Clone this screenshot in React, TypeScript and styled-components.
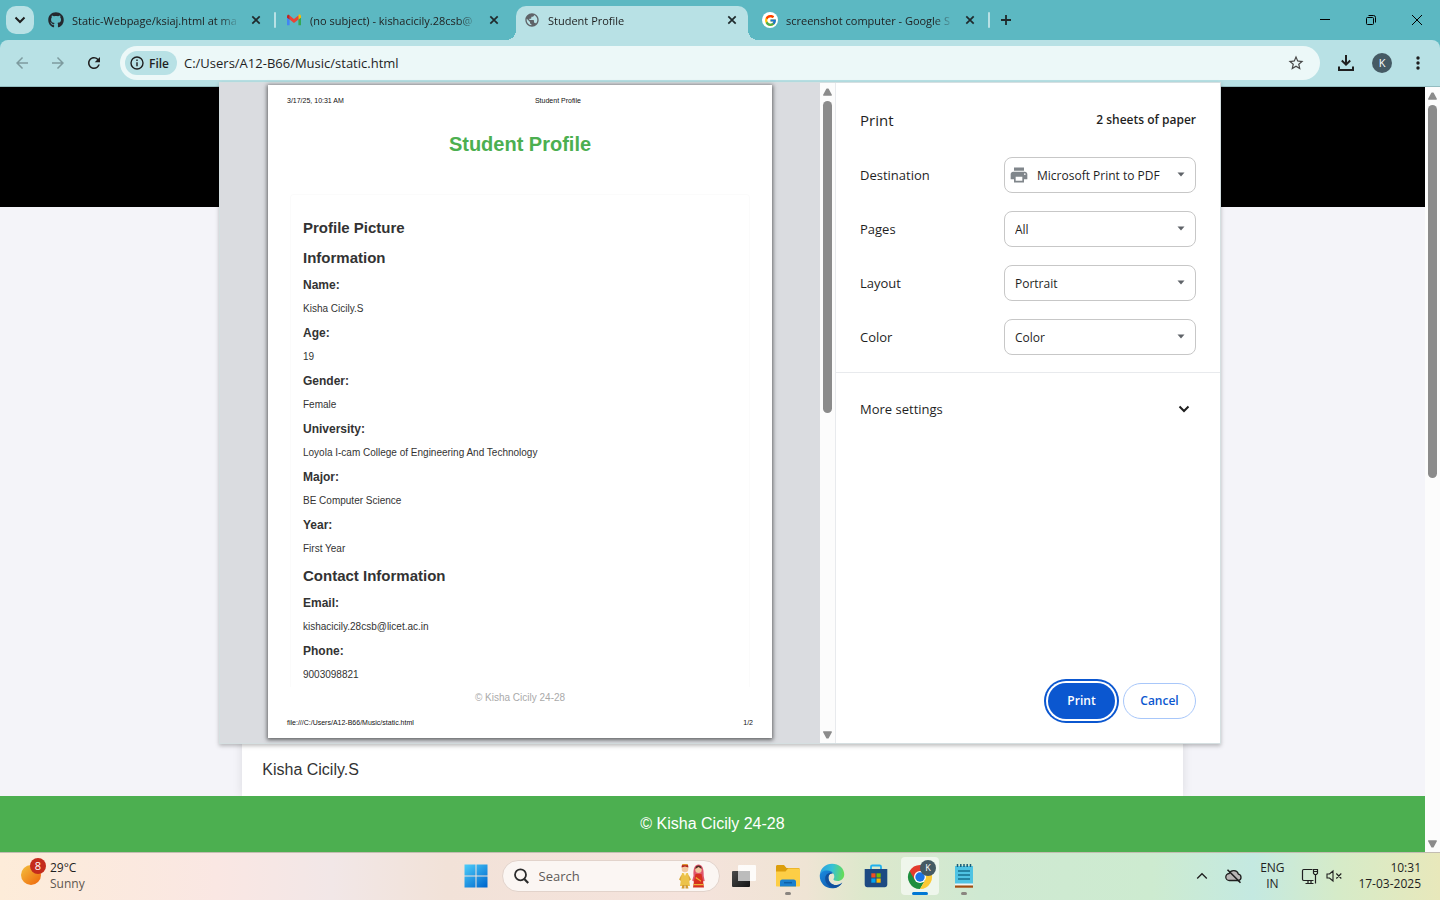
import React from "react";
import styled, { createGlobalStyle, css } from "styled-components";
import { FaGithub } from "react-icons/fa";
import { FcGoogle } from "react-icons/fc";
import { MdArrowBack, MdArrowForward, MdPrint, MdPublic, MdRefresh, MdStarBorder } from "react-icons/md";

const ui = `"Open Sans", "Noto Sans", sans-serif`;
const doc = `"Liberation Sans", Arial, sans-serif`;

const GlobalStyle = createGlobalStyle`
  *, *::before, *::after { box-sizing: border-box; }
  body { margin: 0; font-family: ${ui}; color: #1f1f1f; }
  button, input, select { font: inherit; color: inherit; }
  button { border: 0; padding: 0; background: none; cursor: pointer; }
  h1, h2, h3, p { margin: 0; }
  svg { display: block; flex: none; }
`;

const Screen = styled.div`
  position: relative;
  display: flex;
  flex-direction: column;
  height: 100vh;
  min-height: 800px;
  overflow: hidden;
  background: #5cb8c2;
`;

/* ---------- tab strip ---------- */

const TabStrip = styled.header`
  display: flex;
  align-items: center;
  height: 40px;
  padding-left: 6px;
`;

const TabSearch = styled.button`
  display: grid;
  place-items: center;
  width: 28px;
  height: 28px;
  margin-right: 6px;
  border-radius: 10px;
  background: #b8e1e5;
`;

const Tab = styled.div<{ $active?: boolean }>`
  position: relative;
  display: flex;
  align-items: center;
  gap: 8px;
  width: 232px;
  height: 34px;
  align-self: flex-end;
  padding: 0 8px 6px;
  border-radius: 10px 10px 0 0;
  font-size: 11px;
  line-height: 16px;
  ${(p) =>
    p.$active &&
    css`
      background: #b8e1e5;
      &::before,
      &::after {
        content: "";
        position: absolute;
        bottom: 0;
        width: 10px;
        height: 10px;
      }
      &::before {
        right: 100%;
        background: radial-gradient(circle at 0 0, transparent 10px, #b8e1e5 10px);
      }
      &::after {
        left: 100%;
        background: radial-gradient(circle at 100% 0, transparent 10px, #b8e1e5 10px);
      }
    `}
`;

const TabTitle = styled.span`
  flex: 1;
  padding-top: 2px;
  overflow: hidden;
  white-space: nowrap;
  mask-image: linear-gradient(to right, #000 88%, transparent);
`;

const TabGap = styled.span<{ $line?: boolean }>`
  width: 2px;
  height: 16px;
  margin: 0 2px;
  border-radius: 1px;
  background: ${(p) => (p.$line ? "#b8e1e5" : "transparent")};
`;

const IconButton = styled.button<{ $size?: number }>`
  display: grid;
  place-items: center;
  flex: none;
  width: ${(p) => p.$size ?? 16}px;
  height: ${(p) => p.$size ?? 16}px;
`;

const GoogleBadge = styled.span`
  display: grid;
  place-items: center;
  width: 16px;
  height: 16px;
  border-radius: 50%;
  background: #fff;
`;

const WindowControls = styled.div`
  display: flex;
  margin-left: auto;
`;

const WindowButton = styled.button`
  display: grid;
  place-items: center;
  width: 46px;
  height: 40px;
`;

/* ---------- toolbar ---------- */

const Toolbar = styled.div`
  display: flex;
  align-items: center;
  height: 47px;
  padding: 0 4px;
  border-bottom: 1px solid #93bcc0;
  border-radius: 8px 8px 0 0;
  background: #b8e1e5;
`;

const Omnibox = styled.div`
  display: flex;
  align-items: center;
  flex: 1;
  height: 34px;
  margin: 0 8px;
  padding: 0 6px 0 5px;
  border-radius: 17px;
  background: #ecf8f8;
`;

const FileChip = styled.button`
  display: flex;
  align-items: center;
  gap: 4px;
  height: 24px;
  padding: 0 8px 0 4px;
  border-radius: 12px;
  background: #b8e1e5;
  font-size: 12px;
  font-weight: 600;
`;

const Address = styled.input`
  flex: 1;
  min-width: 0;
  padding: 0 7px;
  border: 0;
  outline: 0;
  background: none;
  font-size: 13px;
  line-height: 20px;
`;

const Avatar = styled.button`
  width: 20px;
  height: 20px;
  margin: 0 8px;
  border-radius: 50%;
  background: #455a64;
  color: #fff;
  font-size: 11px;
  line-height: 20px;
`;

/* ---------- page behind the dialog ---------- */

const Viewport = styled.div`
  display: flex;
  flex: 1;
  min-height: 0;
`;

const WebPage = styled.main`
  display: flex;
  flex-direction: column;
  flex: 1;
  background: #f4f4f9;
  font-family: ${doc};
  font-size: 16px;
  line-height: 18px;
  color: #333;
`;

const Banner = styled.div`
  height: 120px;
  background: #000;
`;

const Card = styled.section`
  display: flex;
  flex: 1;
  align-items: flex-end;
  width: 66%;
  margin: 20px auto 0;
  padding: 17px 20px;
  background: #fff;
  box-shadow: 0 0 10px rgba(0, 0, 0, 0.1);
`;

const PageFooter = styled.footer`
  position: relative;
  padding: 19px;
  background: #4caf50;
  color: #fff;
  text-align: center;
`;

const ScrollTrack = styled.div`
  display: flex;
  flex-direction: column;
  align-items: center;
  flex: none;
  width: 15px;
  padding: 5px 0 4px;
  background: #fcfcfc;
`;

const ScrollThumb = styled.div<{ $grow: number }>`
  flex: ${(p) => p.$grow} 0 0;
  width: 9px;
  margin-top: 5px;
  border-radius: 5px;
  background: #8b8b8b;
`;

const ScrollRest = styled.div<{ $grow: number }>`
  flex: ${(p) => p.$grow} 0 0;
`;

/* ---------- print dialog ---------- */

const Dialog = styled.div`
  position: absolute;
  top: 82px;
  left: 0;
  right: 0;
  display: flex;
  width: 1002px;
  max-width: 100%;
  margin: 0 auto;
  border: 1px solid #d5dfe1;
  background: #fff;
  box-shadow: 0 2px 4px rgba(0, 0, 0, 0.25);
`;

const Preview = styled.div`
  flex: 1;
  padding: 2px 48px 5px;
  background: #dadce0;
`;

const Paper = styled.article`
  display: flex;
  flex-direction: column;
  height: 100%;
  padding-top: 11px;
  background: #fff;
  box-shadow: 0 1px 4px 1px rgba(0, 0, 0, 0.55);
  font-family: ${doc};
  color: #333;
`;

const PaperLine = styled.div`
  display: flex;
  justify-content: space-between;
  padding: 0 19px;
  font-size: 7px;
  line-height: 10px;
  color: #111;
`;

const PaperHeader = styled(PaperLine)`
  padding-right: 0;
`;

const PaperCaption = styled.span`
  flex: 1;
  text-align: center;
`;

const PaperTitle = styled.h1`
  margin-top: 26px;
  font-size: 20px;
  line-height: 24px;
  text-align: center;
  color: #4caf50;
`;

const PaperBox = styled.div`
  margin: 38px 22px 0;
  padding: 18px 12px 0;
  border: 1px solid #fbfbfb;
  border-bottom: 0;
  border-radius: 4px 4px 0 0;
`;

const SectionTitle = styled.h2`
  font-size: 15px;
  line-height: 30px;
`;

const FieldLabel = styled.h3`
  font-size: 12px;
  line-height: 24px;
`;

const FieldValue = styled.p`
  font-size: 10px;
  line-height: 24px;
`;

const PaperCopyright = styled.p`
  font-size: 10px;
  line-height: 22px;
  text-align: center;
  color: #aaa;
`;

const PaperFooter = styled(PaperLine)`
  padding-top: 9px;
  padding-bottom: 10px;
`;

const Settings = styled.form`
  display: flex;
  flex-direction: column;
  width: 385px;
  border-left: 1px solid #e8eaed;
  font-size: 13px;
  line-height: 20px;
`;

const SettingsHead = styled.div`
  display: flex;
  align-items: center;
  justify-content: space-between;
  height: 74px;
  padding: 0 24px;
`;

const SettingsTitle = styled.h1`
  font-size: 15px;
  font-weight: 400;
`;

const Sheets = styled.span`
  font-size: 12px;
  font-weight: 600;
`;

const SettingsList = styled.div`
  display: flex;
  flex-direction: column;
  gap: 18px;
  padding: 0 24px 17px;
  border-bottom: 1px solid #e8eaed;
`;

const SettingRow = styled.label`
  display: flex;
  align-items: center;
  justify-content: space-between;
`;

const SelectWrap = styled.span`
  position: relative;
  width: 192px;
`;

const Select = styled.select<{ $icon?: boolean }>`
  display: block;
  width: 100%;
  height: 36px;
  padding: 2px 24px 0 ${(p) => (p.$icon ? 32 : 10)}px;
  appearance: none;
  border: 1px solid #c7c7c7;
  border-radius: 8px;
  background: #fff;
  font-size: 12px;
`;

const SelectArrow = styled.svg`
  position: absolute;
  top: 15px;
  right: 11px;
  pointer-events: none;
`;

const SelectIcon = styled.span`
  position: absolute;
  top: 8px;
  left: 5px;
  color: #80868b;
  pointer-events: none;
`;

const MoreSettings = styled.button`
  display: flex;
  align-items: center;
  justify-content: space-between;
  height: 71px;
  padding: 0 30px 0 24px;
`;

const Actions = styled.div`
  display: flex;
  justify-content: flex-end;
  gap: 8px;
  margin-top: auto;
  padding: 24px;
`;

const ActionButton = styled.button<{ $primary?: boolean }>`
  height: 36px;
  min-width: ${(p) => (p.$primary ? 67 : 73)}px;
  border-radius: 18px;
  font-size: 12px;
  font-weight: 600;
  ${(p) =>
    p.$primary
      ? css`
          background: #0b57d0;
          color: #fff;
          box-shadow: 0 0 0 2px #fff, 0 0 0 4px #0b57d0;
        `
      : css`
          border: 1px solid #a8c7fa;
          color: #0b57d0;
        `}
`;

/* ---------- taskbar ---------- */

const Taskbar = styled.footer`
  display: grid;
  grid-template-columns: 1fr auto 1fr;
  align-items: center;
  height: 48px;
  padding: 0 19px 0 18px;
  box-shadow: inset 0 1px #c3bdb2;
  background: linear-gradient(
    to right,
    #fdecd9 0%,
    #fae7e3 15%,
    #f2e7e7 23%,
    #f2e2d8 31%,
    #f5e3dc 48%,
    #efe4d4 56%,
    #dde8cc 60%,
    #cfe9d2 68%,
    #cdebd0 80%,
    #c4e9e1 87%,
    #d6ebc8 93%,
    #e8e8bb 100%
  );
  font-size: 12px;
  line-height: 16px;
`;

const Weather = styled.button`
  display: flex;
  align-items: center;
  gap: 3px;
  justify-self: start;
  padding-left: 2px;
  text-align: left;
`;

const Muted = styled.span`
  display: block;
  color: #5c5650;
`;

const Dock = styled.div`
  display: flex;
  align-items: center;
`;

const DockItem = styled.button<{ $active?: boolean; $running?: boolean }>`
  position: relative;
  display: grid;
  place-items: center;
  width: 38px;
  height: 38px;
  margin: 0 3px;
  border-radius: 4px;
  background: ${(p) => (p.$active ? "rgba(255, 255, 255, 0.6)" : "none")};
  &::after {
    content: "";
    position: absolute;
    bottom: 0;
    width: ${(p) => (p.$active ? 16 : 6)}px;
    height: 3px;
    border-radius: 2px;
    background: ${(p) => (p.$active ? "#0078d4" : p.$running ? "#8a8580" : "transparent")};
  }
`;

const SearchBox = styled.label`
  display: flex;
  align-items: center;
  gap: 10px;
  width: 218px;
  height: 32px;
  margin: 0 2px 0 4px;
  padding: 0 14px 0 11px;
  border: 1px solid #e2d3cb;
  border-radius: 16px;
  background: #fbf6f3;
`;

const SearchInput = styled.input`
  flex: 1;
  min-width: 0;
  padding: 0;
  border: 0;
  outline: 0;
  background: none;
  font-size: 13px;
  line-height: 20px;
  &::placeholder {
    color: #5f5b59;
    opacity: 1;
  }
`;

const Tray = styled.div`
  display: flex;
  align-items: center;
  justify-self: end;
  text-align: center;
`;

const TrayButton = styled.button<{ $width: number }>`
  display: grid;
  place-items: center;
  width: ${(p) => p.$width}px;
  height: 32px;
`;

const Clock = styled.button`
  margin-left: 16px;
  text-align: right;
`;

/* ---------- drawings ---------- */

const Close = () => (
  <svg width="16" height="16" viewBox="0 0 16 16" stroke="#1f2a2c" strokeWidth="1.7">
    <path d="M4.3 4.3l7.4 7.4M11.7 4.3l-7.4 7.4" />
  </svg>
);

const Chevron = ({ up = false, weight = 2 }: { up?: boolean; weight?: number }) => (
  <svg width="12" height="12" viewBox="0 0 12 12" fill="none" stroke="#1f1f1f" strokeWidth={weight}>
    <path d={up ? "M1.2 8.5L6 3.7l4.8 4.8" : "M1.500 3.500L6 8l4.500-4.500"} />
  </svg>
);

const Triangle = ({ down = false }: { down?: boolean }) => (
  <svg width="9" height="8" viewBox="0 0 9 8" fill="#8b8b8b" stroke="#8b8b8b" strokeWidth="1.500" strokeLinejoin="round">
    <path d={down ? "M.8 1h7.400L5 6.800H4z" : "M.8 7h7.400L5 1.200H4z"} />
  </svg>
);

const Gmail = () => (
  <svg width="16" height="16" viewBox="0 0 16 16">
    <path d="M1 4v9.3h2.6V6.2z" fill="#4285f4" />
    <path d="M15 4v9.3h-2.6V6.2z" fill="#34a853" />
    <path d="M12.4 3.6v4L15 5.7V4.3c0-1.5-1.5-2.2-2.6-1.4z" fill="#fbbc04" />
    <path d="M3.6 7.6v-4L8 6.9l4.4-3.3v4L8 10.9z" fill="#ea4335" />
    <path d="M1 4.3v1.4l2.6 1.9v-4l-.4-.7C2.2 2.3 1 3 1 4.3z" fill="#c5221f" />
  </svg>
);

const Info = () => (
  <svg width="16" height="16" viewBox="0 0 16 16" fill="none" stroke="#1f1f1f" strokeWidth="1.4">
    <circle cx="8" cy="8" r="6" />
    <path d="M8 7.2v4M8 4.6v1.5" />
  </svg>
);

const Download = () => (
  <svg width="18" height="18" viewBox="0 0 18 18" fill="none" stroke="#1f1f1f" strokeWidth="2">
    <path d="M9 1v9M4.8 6.5L9 10.7l4.2-4.2M2 12.500V16h14v-3.500" />
  </svg>
);

const Dots = () => (
  <svg width="4" height="16" viewBox="0 0 4 16" fill="#1f1f1f">
    <circle cx="2" cy="3" r="1.7" />
    <circle cx="2" cy="8" r="1.7" />
    <circle cx="2" cy="13" r="1.7" />
  </svg>
);

const SunWithAlert = () => (
  <svg width="27" height="36" viewBox="0 0 27 36">
    <defs>
      <linearGradient id="sun" x1="0" y1="0" x2="1" y2="1">
        <stop offset="0.1" stopColor="#f3b83a" />
        <stop offset="0.9" stopColor="#ef6c0e" />
      </linearGradient>
    </defs>
    <circle cx="11" cy="17" r="10" fill="url(#sun)" />
    <circle cx="18" cy="8" r="8" fill="#c42b1c" />
    <text x="18" y="12" fill="#fff" fontSize="11" textAnchor="middle">8</text>
  </svg>
);

const Windows = () => (
  <svg width="24" height="24" viewBox="0 0 24 24">
    <defs>
      <linearGradient id="win" gradientUnits="userSpaceOnUse" x1="0" y1="0" x2="20" y2="24">
        <stop offset="0" stopColor="#4fd0fb" />
        <stop offset="1" stopColor="#0069cf" />
      </linearGradient>
    </defs>
    <path d="M.5.5h11v11H.5zM12.500.5h11v11h-11zM.5 12.500h11v11H.5zM12.500 12.500h11v11h-11z" fill="url(#win)" />
  </svg>
);

const Magnifier = () => (
  <svg width="15" height="16" viewBox="0 0 15 16" fill="none" stroke="#2b2b2b" strokeWidth="1.8">
    <circle cx="6.5" cy="6.8" r="5.5" />
    <path d="M10.3 11l3.9 4" strokeWidth="2.2" />
  </svg>
);

const Couple = () => (
  <svg width="26" height="26" viewBox="0 0 26 26">
    <path d="M2.5 11.5L0 16.5l2 1.5 1.5-2.5zM9.5 11.5l2.5 5-2 1.5-1.5-2.5z" fill="#d9a63c" />
    <path d="M3 10h6l1 6 1 7H1l1-7z" fill="#ecc24a" />
    <path d="M3.5 22h2v3.5h-3zM6.5 22h2l1 3.5h-3z" fill="#d39b33" />
    <circle cx="6" cy="6" r="3.3" fill="#f2c7a0" />
    <path d="M2.6 4.5C2.6 1 4 1 6 1s3.4 0 3.4 3.5L6 3.6z" fill="#b2231e" />
    <path d="M3.3 1.2h5.4v1H3.3z" fill="#e8b232" />
    <path d="M4.5 10L6 13l1.5-3z" fill="#fff1c4" />
    <path d="M14.5 13C14 5 16 1.5 19.5 1.5S25 5 24.7 13l1 5-2 .5h-9l-1.500-1z" fill="#e0556b" />
    <circle cx="19.5" cy="6.8" r="3.2" fill="#f2c7a0" />
    <path d="M16.3 6c.2-3 1.5-3.5 3.2-3.5s3 .5 3.2 3.500l-3.200-2z" fill="#4c2a22" />
    <path d="M16.5 11h6l1.500 7 1 6.500H14l1-6.500z" fill="#d6301f" />
    <path d="M14.5 21h10v1.300h-10zM17 14l5 3.500v1.300l-5.500-3.500z" fill="#eeb13a" />
  </svg>
);

const TaskView = () => (
  <svg width="26" height="24" viewBox="0 0 26 24">
    <defs>
      <linearGradient id="tv" x1="0" y1="0" x2="1" y2="1">
        <stop offset="0" stopColor="#4a4a4a" />
        <stop offset="1" stopColor="#151515" />
      </linearGradient>
    </defs>
    <rect x="1" y="7" width="18" height="16" rx="1" fill="url(#tv)" />
    <rect x="7" y="1" width="18" height="16" rx="1" fill="#fff" fillOpacity="0.85" />
    <path d="M7 7h12v10H8a1 1 0 0 1-1-1z" fill="#bcbcbc" />
  </svg>
);

const Folder = () => (
  <svg width="26" height="24" viewBox="0 0 26 24">
    <path d="M1 2.5C1 1.5 1.7 1 2.5 1H9l2.5 3H23c1 0 2 .6 2 2v4H1z" fill="#dc9e0c" />
    <path d="M1 7.5h9.5L13 4.5h10.500c1 0 1.500.5 1.500 1.500v15.500c0 .6-.5 1-1 1H2c-.6 0-1-.4-1-1z" fill="#fdce46" />
    <path d="M5 22.5V18c0-1.400.8-2.500 2.300-2.500h11.400c1.500 0 2.300 1.100 2.300 2.500v4.500z" fill="#1a80cf" />
    <path d="M9 18.7h8" stroke="#0c5fa6" strokeWidth="1.5" />
  </svg>
);

const Edge = () => (
  <svg width="26" height="26" viewBox="0 0 24 24">
    <defs>
      <linearGradient id="eg" x1="0" y1="0.3" x2="1" y2="0.4">
        <stop offset="0" stopColor="#2a9fe0" />
        <stop offset="0.5" stopColor="#35c1d6" />
        <stop offset="1" stopColor="#66dd55" />
      </linearGradient>
      <linearGradient id="eb" x1="0" y1="0" x2="1" y2="1">
        <stop offset="0" stopColor="#1b8be0" />
        <stop offset="1" stopColor="#0c4fa0" />
      </linearGradient>
    </defs>
    <path d="M.8 10.5C1.5 4.8 6.3.7 12 .7c6.500 0 11.300 4.300 11.300 9.700 0 4-3 6.300-6.100 6.300-2.700 0-3.900-.9-3.900-1.600 0-.5.8-.9.8-2.700 0-2.700-2.600-5-6.100-5-3.300 0-5.800 1.300-7.200 3.100z" fill="url(#eg)" />
    <path d="M.7 12C.7 8.800 4 7 7.300 7c3 0 5 1 6 2.600-3.600-.5-4.800 2.400-4.500 5 .4 3.700 4 6.300 7.700 5.700 2-.3 3.600-1.200 5-2.400-1.800 3.200-5.300 5.400-9.500 5.400C5.500 23.300.7 18.300.7 12z" fill="url(#eb)" />
    <path d="M5.700 14.500c0-3.500 2.300-5.600 5.300-5.600 1 0 1.800.2 2.300.7-3.600-.5-4.800 2.400-4.500 5 .4 3.700 4 6.300 7.700 5.700 2-.3 3.600-1.200 5-2.400-1.300 2.300-3.500 4-6.200 4.900-5.600.2-9.600-3.700-9.600-8.300z" fill="#104f9d" />
  </svg>
);

const Store = () => (
  <svg width="24" height="24" viewBox="0 0 24 24">
    <path d="M7 6V2.800c0-.8.5-1.300 1.300-1.300h7.400c.8 0 1.300.5 1.300 1.300V6" fill="none" stroke="#1fb1ee" strokeWidth="1.8" />
    <path d="M.7 5h22.600v15.500c0 1.600-1 2.700-2.700 2.700H3.400c-1.700 0-2.700-1.100-2.700-2.700z" fill="#1d4a82" />
    <path d="M7.300 9.300h4.200v4.200H7.300z" fill="#f25022" />
    <path d="M12.500 9.300h4.200v4.200h-4.200z" fill="#7fba00" />
    <path d="M7.300 14.500h4.200v4.200H7.300z" fill="#00a4ef" />
    <path d="M12.500 14.500h4.200v4.200h-4.200z" fill="#ffb900" />
  </svg>
);

const Chrome = () => (
  <svg width="32" height="34" viewBox="0 0 32 34">
    <path d="M16 18L5.600 12A12 12 0 0 1 26.400 12z" fill="#e33b2e" />
    <path d="M5.600 12A12 12 0 0 0 16 30l5.200-9z" fill="#1e8e3e" />
    <path d="M16 12h10.400A12 12 0 0 1 16 30l5.200-9z" fill="#fcc934" />
    <path d="M5.600 12L10.800 21 16 12z" fill="#e33b2e" />
    <circle cx="16" cy="18" r="6" fill="#fff" />
    <circle cx="16" cy="18" r="4.700" fill="#1a73e8" />
    <circle cx="24" cy="9" r="8" fill="#455a64" />
    <text x="24" y="12" fill="#fff" fontSize="9" textAnchor="middle">K</text>
  </svg>
);

const Notepad = () => (
  <svg width="20" height="26" viewBox="0 0 20 26">
    <path d="M1 3h18v18H1z" fill="#4fc3e3" />
    <path d="M3.5 1v3M6.800 1v3M10 1v3M13.200 1v3M16.500 1v3" stroke="#1a5c77" strokeWidth="1.5" />
    <path d="M4 8h12M4 12h12M4 16h12" stroke="#17708f" strokeWidth="1.7" />
    <path d="M1 20.500h18v2H1z" fill="#f3f3f3" />
    <path d="M1 22.500h18v2.200H1z" fill="#a54e12" />
  </svg>
);

const CloudOff = () => (
  <svg width="18" height="16" viewBox="0 0 18 16" stroke="#1f1f1f" strokeWidth="1.3">
    <path d="M4.500 12.500a3.500 3.500 0 0 1-.4-7 5 5 0 0 1 9.300.6 3.300 3.300 0 0 1 .2 6.400z" fill="#b9b5b5" />
    <path d="M2.500 1.800l13 13" strokeWidth="1.6" />
  </svg>
);

const Network = () => (
  <svg width="18" height="18" viewBox="0 0 18 18" fill="none" stroke="#1f1f1f" strokeWidth="1.2">
    <path d="M11.500 2.500H2.700c-.8 0-1.200.5-1.200 1.200v8.600c0 .7.400 1.200 1.200 1.200h9.800M7 13.500v3M10 13.500v3M4.500 16.500h8" />
    <path d="M12.500 2.500h4v3.800l-1 1.200h-2l-1-1.200zM14.500 7.500v9M12.500 4.500h4" />
  </svg>
);

const VolumeMuted = () => (
  <svg width="16" height="14" viewBox="0 0 16 14" fill="none" stroke="#1f1f1f" strokeWidth="1.1">
    <path d="M1 5v4h2.500L7 12V2L3.500 5zM10.300 4.500l5 5M15.300 4.500l-5 5" />
  </svg>
);

/* ---------- data ---------- */

const tabs = [
  { title: "Static-Webpage/ksiaj.html at ma", icon: <FaGithub size={16} color="#24292f" />, line: true },
  { title: "(no subject) - kishacicily.28csb@", icon: <Gmail />, line: false },
  { title: "Student Profile", icon: <MdPublic size={16} color="#5f6368" />, active: true, line: false },
  {
    title: "screenshot computer - Google S",
    icon: <GoogleBadge><FcGoogle size={13} /></GoogleBadge>,
    line: true,
  },
];

const profile = [
  { label: "Name:", value: "Kisha Cicily.S" },
  { label: "Age:", value: "19" },
  { label: "Gender:", value: "Female" },
  { label: "University:", value: "Loyola I-cam College of Engineering And Technology" },
  { label: "Major:", value: "BE Computer Science" },
  { label: "Year:", value: "First Year" },
];

const contact = [
  { label: "Email:", value: "kishacicily.28csb@licet.ac.in" },
  { label: "Phone:", value: "9003098821" },
];

const settings = [
  { label: "Destination", value: "Microsoft Print to PDF", icon: true },
  { label: "Pages", value: "All" },
  { label: "Layout", value: "Portrait" },
  { label: "Color", value: "Color" },
];

const Fields = ({ items }: { items: { label: string; value: string }[] }) => (
  <>
    {items.map((f) => (
      <React.Fragment key={f.label}>
        <FieldLabel>{f.label}</FieldLabel>
        <FieldValue>{f.value}</FieldValue>
      </React.Fragment>
    ))}
  </>
);

const Scrollbar = ({ thumb, rest }: { thumb: number; rest: number }) => (
  <ScrollTrack>
    <Triangle />
    <ScrollThumb $grow={thumb} />
    <ScrollRest $grow={rest} />
    <Triangle down />
  </ScrollTrack>
);

export default function App() {
  return (
    <Screen>
      <GlobalStyle />
      <TabStrip>
        <TabSearch aria-label="Search tabs"><Chevron /></TabSearch>
        {tabs.map((t) => (
          <React.Fragment key={t.title}>
            <Tab $active={t.active}>
              {t.icon}
              <TabTitle>{t.title}</TabTitle>
              <IconButton aria-label="Close tab"><Close /></IconButton>
            </Tab>
            <TabGap $line={t.line} />
          </React.Fragment>
        ))}
        <IconButton $size={28} aria-label="New tab">
          <svg width="12" height="12" viewBox="0 0 12 12" stroke="#1f2a2c" strokeWidth="1.8">
            <path d="M6 1v10M1 6h10" />
          </svg>
        </IconButton>
        <WindowControls>
          <WindowButton aria-label="Minimize">
            <svg width="10" height="10" viewBox="0 0 10 10" stroke="#000"><path d="M0 4.500h10" /></svg>
          </WindowButton>
          <WindowButton aria-label="Restore">
            <svg width="10" height="10" viewBox="0 0 10 10" fill="none" stroke="#000">
              <rect x="0.5" y="2.5" width="7" height="7" rx="1" />
              <path d="M2.500.5h5a2 2 0 0 1 2 2v5" />
            </svg>
          </WindowButton>
          <WindowButton aria-label="Close">
            <svg width="10" height="10" viewBox="0 0 10 10" stroke="#000"><path d="M0 0l10 10M10 0L0 10" /></svg>
          </WindowButton>
        </WindowControls>
      </TabStrip>

      <Toolbar>
        <IconButton $size={36} aria-label="Back"><MdArrowBack size={18} color="#7d9b9f" /></IconButton>
        <IconButton $size={36} aria-label="Forward"><MdArrowForward size={18} color="#7d9b9f" /></IconButton>
        <IconButton $size={36} aria-label="Reload"><MdRefresh size={18} color="#1f1f1f" /></IconButton>
        <Omnibox>
          <FileChip><Info />File</FileChip>
          <Address aria-label="Address" defaultValue="C:/Users/A12-B66/Music/static.html" />
          <IconButton $size={36} aria-label="Bookmark"><MdStarBorder size={18} color="#474747" /></IconButton>
        </Omnibox>
        <IconButton $size={36} aria-label="Downloads"><Download /></IconButton>
        <Avatar aria-label="Profile">K</Avatar>
        <IconButton $size={36} aria-label="Menu"><Dots /></IconButton>
      </Toolbar>

      <Viewport>
        <WebPage>
          <Banner />
          <Card><p>Kisha Cicily.S</p></Card>
          <PageFooter>© Kisha Cicily 24-28</PageFooter>
        </WebPage>
        <Scrollbar thumb={373} rest={362} />
      </Viewport>

      <Taskbar>
        <Weather>
          <SunWithAlert />
          <span>29°C<Muted>Sunny</Muted></span>
        </Weather>
        <Dock>
          <DockItem aria-label="Start"><Windows /></DockItem>
          <SearchBox>
            <Magnifier />
            <SearchInput aria-label="Search" placeholder="Search" />
            <Couple />
          </SearchBox>
          <DockItem aria-label="Task view"><TaskView /></DockItem>
          <DockItem $running aria-label="File Explorer"><Folder /></DockItem>
          <DockItem aria-label="Edge"><Edge /></DockItem>
          <DockItem aria-label="Store"><Store /></DockItem>
          <DockItem $active aria-label="Chrome"><Chrome /></DockItem>
          <DockItem $running aria-label="Notepad"><Notepad /></DockItem>
        </Dock>
        <Tray>
          <TrayButton $width={32} aria-label="Hidden icons"><Chevron up weight={1.3} /></TrayButton>
          <TrayButton $width={32} aria-label="OneDrive"><CloudOff /></TrayButton>
          <TrayButton $width={44}><span>ENG<br />IN</span></TrayButton>
          <TrayButton $width={32} aria-label="Network"><Network /></TrayButton>
          <TrayButton $width={16} aria-label="Volume"><VolumeMuted /></TrayButton>
          <Clock>10:31<br />17-03-2025</Clock>
        </Tray>
      </Taskbar>

      <Dialog role="dialog" aria-label="Print">
        <Preview>
          <Paper>
            <PaperHeader>
              <span>3/17/25, 10:31 AM</span>
              <PaperCaption>Student Profile</PaperCaption>
            </PaperHeader>
            <PaperTitle>Student Profile</PaperTitle>
            <PaperBox>
              <SectionTitle>Profile Picture</SectionTitle>
              <SectionTitle>Information</SectionTitle>
              <Fields items={profile} />
              <SectionTitle>Contact Information</SectionTitle>
              <Fields items={contact} />
            </PaperBox>
            <PaperCopyright>© Kisha Cicily 24-28</PaperCopyright>
            <PaperFooter>
              <span>file:///C:/Users/A12-B66/Music/static.html</span>
              <span>1/2</span>
            </PaperFooter>
          </Paper>
        </Preview>
        <Scrollbar thumb={312} rest={318} />
        <Settings onSubmit={(e) => e.preventDefault()}>
          <SettingsHead>
            <SettingsTitle>Print</SettingsTitle>
            <Sheets>2 sheets of paper</Sheets>
          </SettingsHead>
          <SettingsList>
            {settings.map((s) => (
              <SettingRow key={s.label}>
                {s.label}
                <SelectWrap>
                  <Select $icon={s.icon}>
                    <option>{s.value}</option>
                  </Select>
                  {s.icon && <SelectIcon><MdPrint size={20} /></SelectIcon>}
                  <SelectArrow width="8" height="5" viewBox="0 0 8 5" fill="#5f6368">
                    <path d="M.5.5h7L4 4.500z" />
                  </SelectArrow>
                </SelectWrap>
              </SettingRow>
            ))}
          </SettingsList>
          <MoreSettings type="button">
            More settings
            <Chevron />
          </MoreSettings>
          <Actions>
            <ActionButton $primary>Print</ActionButton>
            <ActionButton type="button">Cancel</ActionButton>
          </Actions>
        </Settings>
      </Dialog>
    </Screen>
  );
}
